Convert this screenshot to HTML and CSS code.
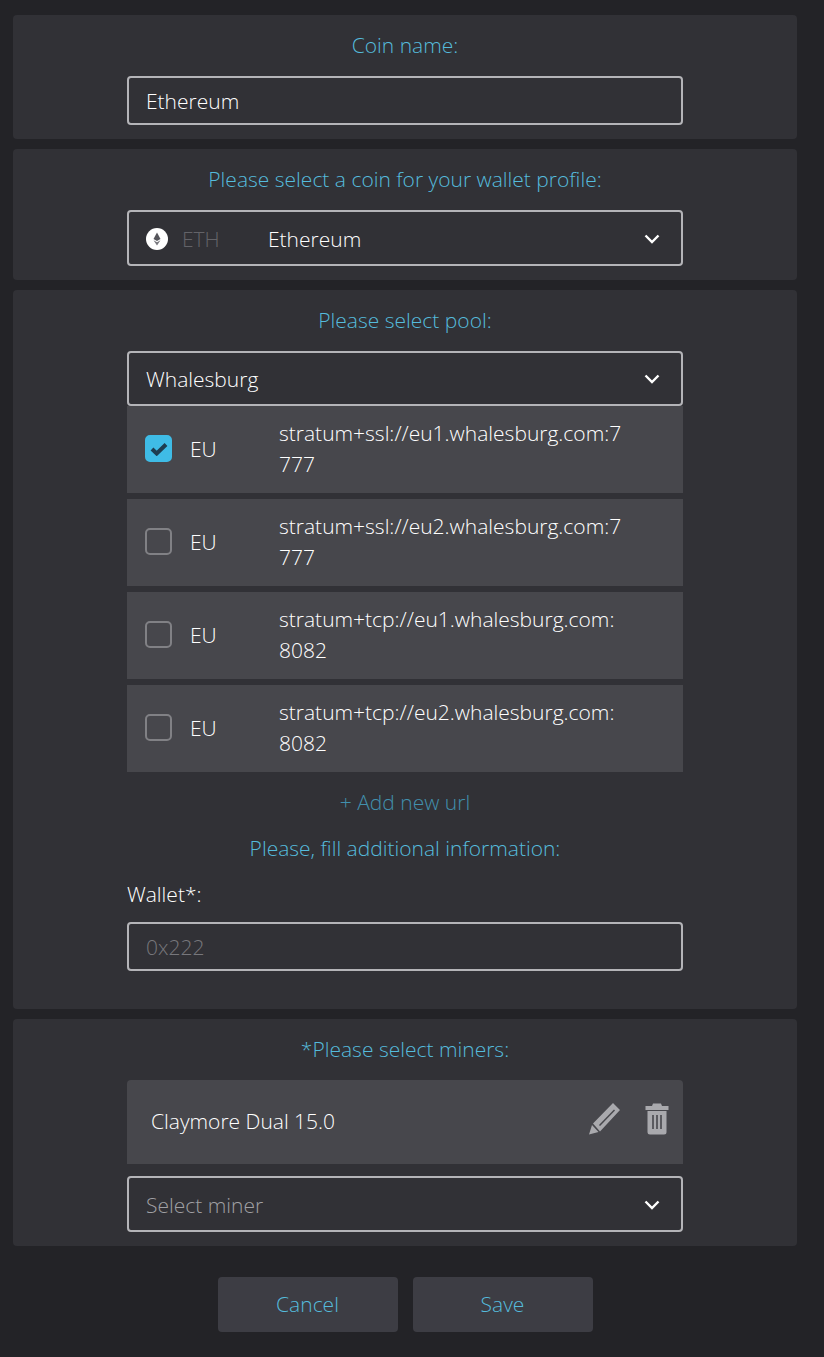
FILE: index.html
```html
<!DOCTYPE html>
<html lang="en">
<head>
<meta charset="utf-8">
<title>Wallet profile</title>
<link rel="stylesheet" href="styles.css">
</head>
<body>
<main class="page">
  <section class="card card-name">
    <h2 class="title">Coin name:</h2>
    <div class="field input">Ethereum</div>
  </section>

  <section class="card card-coin">
    <h2 class="title">Please select a coin for your wallet profile:</h2>
    <div class="field select select-tall">
      <svg class="coin-icon" viewBox="0 0 22 22" aria-hidden="true">
        <circle cx="11" cy="11" r="11" fill="#fff"/>
        <path d="M11 4.500 L7.500 11 L11 13 L14.500 11 Z" fill="#55555b"/>
        <path d="M11 14.200 L7.500 12.200 L11 17.500 L14.500 12.200 Z" fill="#77777d"/>
      </svg>
      <span class="ticker">ETH</span>
      <span class="coin-name">Ethereum</span>
      <svg class="chevron" viewBox="0 0 16 10" aria-hidden="true"><path d="M1.5 1.5 L8 8 L14.500 1.5"/></svg>
    </div>
  </section>

  <section class="card card-pool">
    <h2 class="title">Please select pool:</h2>
    <div class="field select">
      <span>Whalesburg</span>
      <svg class="chevron" viewBox="0 0 16 10" aria-hidden="true"><path d="M1.5 1.5 L8 8 L14.500 1.5"/></svg>
    </div>
    <ul class="urls">
      <li class="url">
        <span class="check checked"><svg viewBox="0 0 18 14" aria-hidden="true"><path d="M2 7 L6.700 11.500 L16 2.500"/></svg></span>
        <span class="region">EU</span>
        <span class="address">stratum+ssl://eu1.whalesburg.com:7777</span>
      </li>
      <li class="url">
        <span class="check"></span>
        <span class="region">EU</span>
        <span class="address">stratum+ssl://eu2.whalesburg.com:7777</span>
      </li>
      <li class="url">
        <span class="check"></span>
        <span class="region">EU</span>
        <span class="address">stratum+tcp://eu1.whalesburg.com:8082</span>
      </li>
      <li class="url">
        <span class="check"></span>
        <span class="region">EU</span>
        <span class="address">stratum+tcp://eu2.whalesburg.com:8082</span>
      </li>
    </ul>
    <div class="add-url">+ Add new url</div>
    <h2 class="title title-extra">Please, fill additional information:</h2>
    <div class="wallet-label">Wallet*:</div>
    <div class="field input placeholder">0x222</div>
  </section>

  <section class="card card-miners">
    <h2 class="title">*Please select miners:</h2>
    <div class="miner">
      <span class="miner-name">Claymore Dual 15.0</span>
      <svg class="icon-edit" viewBox="0 0 32 32" aria-hidden="true">
        <path d="M24 0 L31 7 L11 28.500 L4 20.500 Z M3 22 L9.500 29 L0 31.500 Z" fill="#a9a9ad"/>
        <path d="M10.500 22.500 L25.500 7" stroke="#47474c" stroke-width="1.500" fill="none"/>
      </svg>
      <svg class="icon-trash" viewBox="0 0 24 32" aria-hidden="true">
        <path d="M8 0.500 H16 L17 3 H23.500 V7 H0.500 V3 H7 Z" fill="#a9a9ad"/>
        <path d="M2.500 8 H21.500 V29 Q21.500 31.500 19 31.500 H5 Q2.500 31.500 2.500 29 Z" fill="#a9a9ad"/>
        <path d="M8 12 V26 M12 12 V26 M16 12 V26" stroke="#47474c" stroke-width="1.600" fill="none"/>
      </svg>
    </div>
    <div class="field select select-tall select-miner">
      <span class="muted">Select miner</span>
      <svg class="chevron" viewBox="0 0 16 10" aria-hidden="true"><path d="M1.5 1.5 L8 8 L14.500 1.5"/></svg>
    </div>
  </section>

  <div class="actions">
    <button class="btn" type="button">Cancel</button>
    <button class="btn" type="button">Save</button>
  </div>
</main>
</body>
</html>
```
FILE: styles.css
```css
* { box-sizing: border-box; }

html, body { margin: 0; padding: 0; }

body {
  height: 1357px;
  overflow: hidden;
  background: #232327;
  color: #fff;
  font-family: "Open Sans", sans-serif;
  font-size: 21px;
  font-weight: 300;
}

.page {
  width: 784px;
  margin-left: 13px;
  padding-top: 15px;
  display: flex;
  flex-direction: column;
  gap: 10px;
}

.card {
  background: #313136;
  border-radius: 4px;
  padding: 15px 114px 14px;
  display: flex;
  flex-direction: column;
}

.card-pool { padding-bottom: 38px; }

.title {
  margin: 0 0 16px;
  font-size: 21px;
  font-weight: 300;
  line-height: 30px;
  text-align: center;
  color: #55bbdc;
}

.field {
  border: 2px solid #b4b4b8;
  border-radius: 4px;
  padding: 0 17px;
  display: flex;
  align-items: center;
  line-height: 28px;
}

.input { height: 49px; }

.select { height: 55px; }

.select-tall { height: 56px; padding-top: 2px; }

.placeholder { color: #77777c; }

.muted { color: #a0a0a4; }

.coin-icon { width: 22px; height: 22px; flex: none; margin-right: 14px; }

.ticker { width: 86px; color: #636368; flex: none; }

.chevron {
  width: 16px;
  height: 10px;
  margin-left: auto;
  margin-right: 4px;
  fill: none;
  stroke: #fff;
  stroke-width: 2.4;
}

.urls {
  list-style: none;
  margin: 0;
  padding: 0;
  display: flex;
  flex-direction: column;
  gap: 6px;
}

.url {
  height: 87px;
  padding: 0 0 2px 18px;
  background: #47474c;
  display: flex;
  align-items: center;
}

.check {
  width: 27px;
  height: 27px;
  flex: none;
  border: 2px solid #818185;
  border-radius: 5px;
  display: flex;
  align-items: center;
  justify-content: center;
}

.check.checked { background: #3fbce6; border-color: #3fbce6; }

.check svg {
  width: 18px;
  height: 14px;
  fill: none;
  stroke: #1e3d50;
  stroke-width: 4;
}

.region { width: 89px; margin-left: 18px; flex: none; }

.address {
  width: 345px;
  line-height: 31px;
  overflow-wrap: anywhere;
}

.add-url {
  margin-top: 15px;
  line-height: 30px;
  text-align: center;
  color: #4290ad;
}

.title-extra { margin: 16px 0 16px; }

.wallet-label { line-height: 30px; margin-bottom: 13px; }

.miner {
  height: 84px;
  padding: 0 14px 2px 24px;
  background: #47474c;
  border-radius: 4px 4px 0 0;
  display: flex;
  align-items: center;
}

.miner-name { margin-right: auto; }

.icon-edit { width: 32px; height: 32px; margin: -4px 24px 0 0; }

.icon-trash { width: 24px; height: 32px; margin-top: -5px; }

.select-miner { margin-top: 12px; }

.actions {
  margin-top: 21px;
  display: flex;
  justify-content: center;
  gap: 15px;
}

.btn {
  width: 180px;
  height: 55px;
  padding: 0 0 2px;
  border: 0;
  border-radius: 4px;
  background: #3d3d44;
  color: #55bbdc;
  font: inherit;
}
```
